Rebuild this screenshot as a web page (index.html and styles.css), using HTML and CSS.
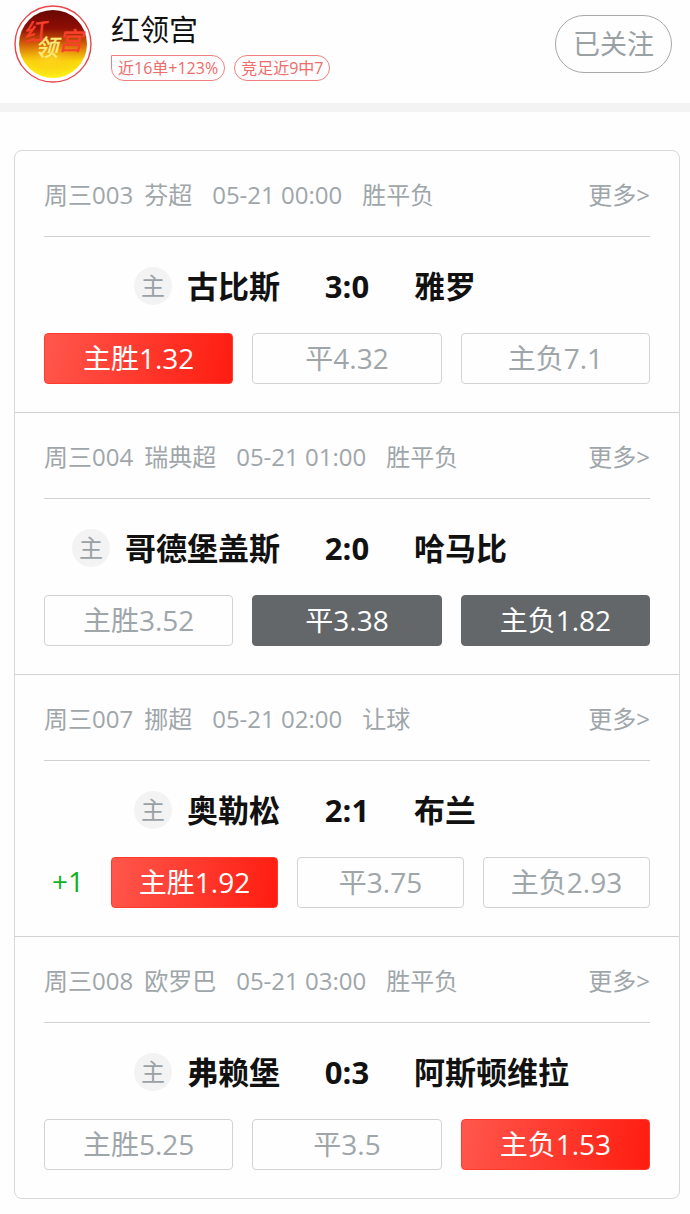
FILE: index.html
```html
<!DOCTYPE html>
<html lang="zh-CN">
<head>
    <meta charset="UTF-8">
    <meta name="viewport" content="width=device-width, initial-scale=1.0">
    <title>红领宫</title>
    <link rel="stylesheet" href="styles.css">
</head>
<body>
    <header class="profile">
        <svg class="avatar" viewBox="0 0 78 78" role="img" aria-label="头像">
            <defs>
                <linearGradient id="fire" x1="0" y1="0" x2="0" y2="1">
                    <stop offset="0" stop-color="#5d0603"/>
                    <stop offset="0.3" stop-color="#8e0e04"/>
                    <stop offset="0.52" stop-color="#d86a08"/>
                    <stop offset="0.72" stop-color="#fbd80c"/>
                    <stop offset="1" stop-color="#fdf91c"/>
                </linearGradient>
                <radialGradient id="glow">
                    <stop offset="0" stop-color="#ffd828" stop-opacity="0.6"/>
                    <stop offset="1" stop-color="#f8a010" stop-opacity="0"/>
                </radialGradient>
                <clipPath id="round"><circle cx="39" cy="39" r="34"/></clipPath>
            </defs>
            <circle cx="39" cy="39" r="38" fill="#fff" stroke="#e8474d" stroke-width="1.4"/>
            <g clip-path="url(#round)">
                <rect width="78" height="78" fill="url(#fire)"/>
                <ellipse cx="37" cy="54" rx="28" ry="18" fill="url(#glow)"/>
            </g>
            <g class="avatar-text" fill="#f8402c" stroke="#f8402c" stroke-width="0.5">
                <text x="9" y="36" font-size="24" transform="rotate(-8 20 27)">红</text>
                <text x="44" y="45" font-size="25">宫</text>
            </g>
            <text class="avatar-text" x="21" y="51" font-size="23" fill="#fdec7c" stroke="#fdec7c" stroke-width="0.5">领</text>
        </svg>
        <div class="info">
            <h1>红领宫</h1>
            <div class="tags">
                <span class="tag tag-first">近16单+123%</span>
                <span class="tag">竞足近9中7</span>
            </div>
        </div>
        <button type="button" class="follow">已关注</button>
    </header>

    <main class="matches">
        <section class="match">
            <div class="match-head">
                <span class="no">周三003</span>
                <span class="league">芬超</span>
                <span class="time">05-21 00:00</span>
                <span>胜平负</span>
                <a class="more" href="#">更多&gt;</a>
            </div>
            <div class="teams">
                <div class="home"><span class="mark">主</span>古比斯</div>
                <div class="score">3:0</div>
                <div class="away">雅罗</div>
            </div>
            <div class="odds">
                <button type="button" class="hit">主胜1.32</button>
                <button type="button">平4.32</button>
                <button type="button">主负7.1</button>
            </div>
        </section>

        <section class="match">
            <div class="match-head">
                <span class="no">周三004</span>
                <span class="league">瑞典超</span>
                <span class="time">05-21 01:00</span>
                <span>胜平负</span>
                <a class="more" href="#">更多&gt;</a>
            </div>
            <div class="teams">
                <div class="home"><span class="mark">主</span>哥德堡盖斯</div>
                <div class="score">2:0</div>
                <div class="away">哈马比</div>
            </div>
            <div class="odds">
                <button type="button">主胜3.52</button>
                <button type="button" class="miss">平3.38</button>
                <button type="button" class="miss">主负1.82</button>
            </div>
        </section>

        <section class="match">
            <div class="match-head">
                <span class="no">周三007</span>
                <span class="league">挪超</span>
                <span class="time">05-21 02:00</span>
                <span>让球</span>
                <a class="more" href="#">更多&gt;</a>
            </div>
            <div class="teams">
                <div class="home"><span class="mark">主</span>奥勒松</div>
                <div class="score">2:1</div>
                <div class="away">布兰</div>
            </div>
            <div class="odds">
                <span class="handicap">+1</span>
                <button type="button" class="hit">主胜1.92</button>
                <button type="button">平3.75</button>
                <button type="button">主负2.93</button>
            </div>
        </section>

        <section class="match">
            <div class="match-head">
                <span class="no">周三008</span>
                <span class="league">欧罗巴</span>
                <span class="time">05-21 03:00</span>
                <span>胜平负</span>
                <a class="more" href="#">更多&gt;</a>
            </div>
            <div class="teams">
                <div class="home"><span class="mark">主</span>弗赖堡</div>
                <div class="score">0:3</div>
                <div class="away">阿斯顿维拉</div>
            </div>
            <div class="odds">
                <button type="button">主胜5.25</button>
                <button type="button">平3.5</button>
                <button type="button" class="hit">主负1.53</button>
            </div>
        </section>
    </main>
</body>
</html>
```
FILE: styles.css
```css
* {
    box-sizing: border-box;
}

body {
    margin: 0;
    background-color: #fefefe;
    color: #111111;
    font-family: "Open Sans", "Noto Sans CJK SC", sans-serif;
}

button {
    font-family: inherit;
    cursor: pointer;
}

/* 顶部用户信息 */
.profile {
    display: flex;
    align-items: flex-start;
    padding: 5px 18px 20px 14px;
    border-bottom: 9px solid #f3f3f3;
}

.avatar {
    flex: none;
    width: 78px;
    height: 78px;
}

.avatar-text {
    font-family: "Noto Sans CJK SC", sans-serif;
    font-style: italic;
}

.info {
    flex: 1;
    margin-left: 19px;
}

.info h1 {
    margin: 0;
    font-size: 29px;
    font-weight: normal;
    line-height: 50px;
}

.tags {
    display: flex;
    gap: 9px;
}

.tag {
    padding: 0 6px;
    border: 1px solid #f08080;
    border-radius: 13px;
    color: #ee6c6c;
    font-size: 16px;
    line-height: 24px;
}

.tag-first {
    border-top-left-radius: 0;
}

.follow {
    height: 58px;
    margin-top: 10px;
    padding: 0 17px 4px;
    border: 1px solid #a5a9ac;
    border-radius: 29px;
    background: none;
    color: #9aa1a5;
    font-size: 27px;
}

/* 比赛列表 */
.matches {
    margin: 38px 10px 15px 14px;
    border: 1px solid #d6d8da;
    border-radius: 8px;
}

.match {
    padding: 0 29px 28px;
}

.match + .match {
    border-top: 1px solid #d0d2d4;
}

.match-head {
    display: flex;
    padding-top: 3px;
    border-bottom: 1px solid #cfd1d2;
    color: #9fa6aa;
    font-size: 24px;
    line-height: 82px;
    white-space: nowrap;
}

.no {
    margin-right: 11px;
}

.league,
.time {
    margin-right: 20px;
}

.more {
    margin-left: auto;
    color: inherit;
    text-decoration: none;
}

/* 对阵和比分 */
.teams {
    display: grid;
    grid-template-columns: 1fr 134px 1fr;
    padding-top: 2px;
    font-size: 31px;
    font-weight: bold;
    line-height: 94px;
    white-space: nowrap;
}

.home {
    display: flex;
    align-items: center;
    justify-content: flex-end;
}

.mark {
    width: 38px;
    height: 38px;
    margin-right: 15px;
    border-radius: 50%;
    background-color: #f3f3f3;
    color: #9aa1a5;
    font-size: 24px;
    font-weight: normal;
    line-height: 38px;
    text-align: center;
}

.score {
    text-align: center;
}

/* 赔率按钮 */
.odds {
    display: flex;
    gap: 19px;
}

.odds button {
    flex: 1;
    height: 51px;
    padding: 0 0 4px;
    border: 1px solid #d0d3d5;
    border-radius: 4px;
    background: none;
    color: #9fa6aa;
    font-size: 28px;
}

.odds .hit {
    border-color: #ff3a2e;
    background: linear-gradient(100deg, #ff574c, #ff1c10);
    color: #ffffff;
}

.odds .miss {
    border-color: #63676a;
    background-color: #63676a;
    color: #ffffff;
}

.handicap {
    width: 48px;
    color: #12b01e;
    font-size: 28px;
    line-height: 49px;
    text-align: center;
}
```
